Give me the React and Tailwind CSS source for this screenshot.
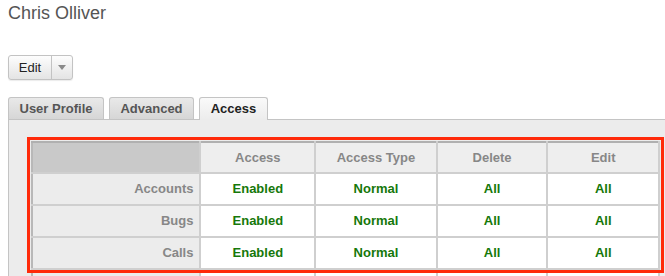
export default function App() {
  const cols = ["Access", "Access Type", "Delete", "Edit"];
  const rows = ["Accounts", "Bugs", "Calls"];
  const vals = ["Enabled", "Normal", "All", "All"];
  const widths = ["w-[169px]", "w-[115px]", "w-[122px]", "w-[111px]", "w-[112px]"];
  return (
    <div className="h-[276px] w-[665px] overflow-hidden bg-white font-['Liberation_Sans',Arial,sans-serif]">
      <div className="pl-[8px] pt-[2px] text-[18px] leading-[22px] text-[#555555]">Chris Olliver</div>
      <div className="ml-[8px] mt-[31px] flex h-[25px] w-[65px] rounded-[3px] border border-[#c3c3c3] bg-gradient-to-b from-[#fdfdfd] to-[#e4e4e4] shadow-[0_1px_1px_rgba(0,0,0,0.08)]">
        <div className="flex w-[43px] items-center justify-center border-r border-[#c3c3c3] text-[13px] text-[#222222]">Edit</div>
        <div className="flex flex-1 items-center justify-center">
          <svg width="8" height="5" viewBox="0 0 8 5"><path d="M0 0h8L4 5z" fill="#8a8a8a" /></svg>
        </div>
      </div>
      <div className="ml-[8px] mt-[16px] flex h-[23px] items-end gap-[5px]">
        <div className="flex h-[22px] w-[96px] items-center justify-center rounded-t-[3px] border border-b-0 border-[#c4c4c4] bg-gradient-to-b from-[#e9e9e9] to-[#d6d6d6] text-[13px] font-bold text-[#555555]">User Profile</div>
        <div className="flex h-[22px] w-[85px] items-center justify-center rounded-t-[3px] border border-b-0 border-[#c4c4c4] bg-gradient-to-b from-[#e9e9e9] to-[#d6d6d6] text-[13px] font-bold text-[#555555]">Advanced</div>
        <div className="relative z-10 mb-[-1px] flex h-[23px] w-[69px] items-center justify-center rounded-t-[3px] border border-b-0 border-[#c4c4c4] bg-gradient-to-b from-[#fafafa] to-[#ececec] text-[13px] font-bold text-[#222222]">Access</div>
      </div>
      <div className="ml-[8px] h-[200px] border-l border-t border-[#c4c4c4] bg-[#ececec] pl-[22px] pt-[21px]">
        <div className="relative w-[629px]">
          <table className="border-collapse text-[13px] font-bold">
            <thead>
              <tr className="h-[31px]">
                <th className={`${widths[0]} border-2 border-[#cfcfcf] border-t-[#b0b0b0] border-l-[#b8b8b8] bg-[#c9c9c9]`}></th>
                {cols.map((c, i) => (
                  <th key={c} className={`${widths[i + 1]} border-2 border-[#cfcfcf] border-t-[#b0b0b0] bg-[#eeeeee] text-center text-[#878787]`}>{c}</th>
                ))}
              </tr>
            </thead>
            <tbody>
              {rows.map((r) => (
                <tr key={r} className="h-[32px]">
                  <td className="border-2 border-[#cfcfcf] border-l-[#b8b8b8] bg-[#ececec] pr-[6px] text-right text-[#878787]">{r}</td>
                  {vals.map((v, i) => (
                    <td key={i} className="border-2 border-[#cfcfcf] bg-white text-center text-[#16780a]">{v}</td>
                  ))}
                </tr>
              ))}
              <tr className="h-[32px]">
                <td className="border-2 border-[#cfcfcf] border-l-[#b8b8b8] bg-[#ececec]"></td>
                {vals.map((v, i) => (
                  <td key={i} className="border-2 border-[#cfcfcf] bg-white"></td>
                ))}
              </tr>
            </tbody>
          </table>
          <div className="pointer-events-none absolute left-[-4px] top-[-4px] h-[136px] w-[637px] border-[3px] border-[#ff2a0a]"></div>
        </div>
      </div>
    </div>
  );
}
